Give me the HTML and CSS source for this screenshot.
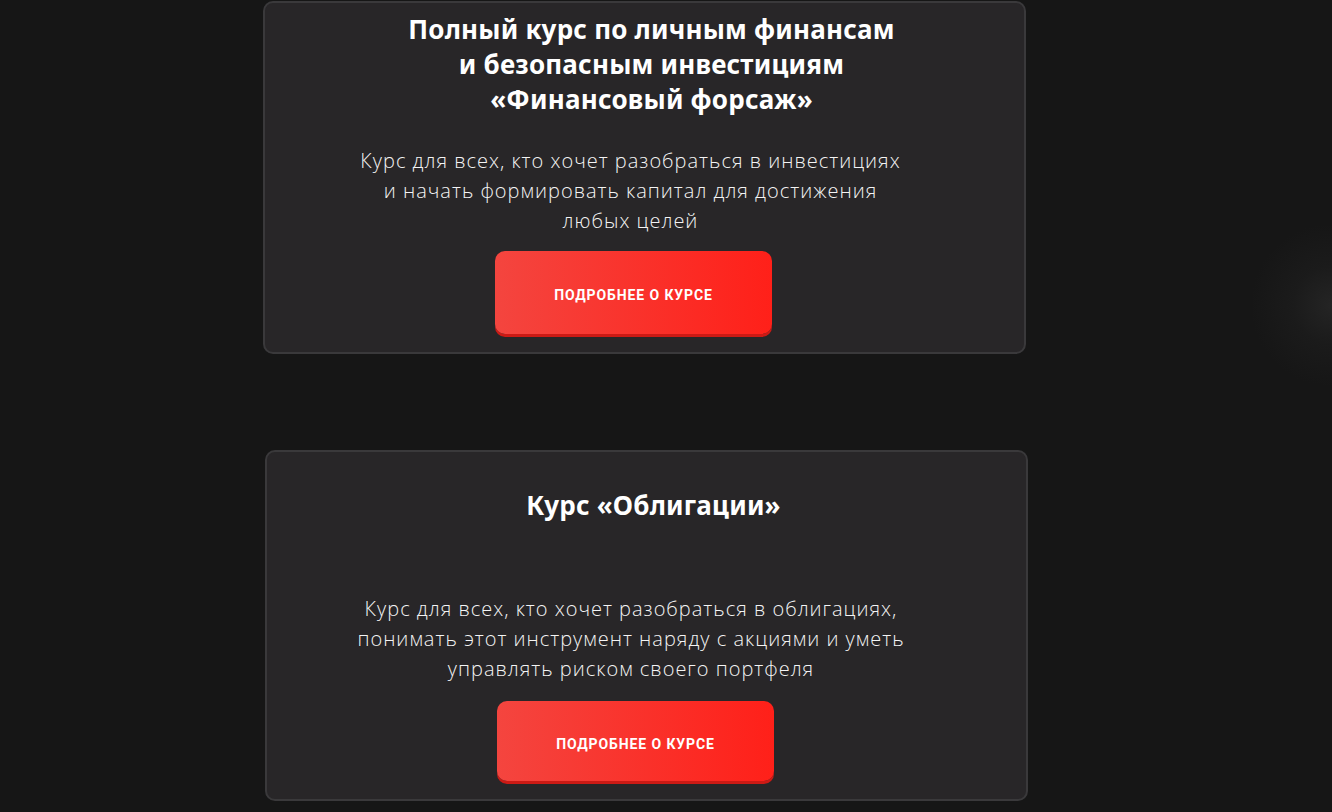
FILE: index.html
```html
<!DOCTYPE html>
<html lang="ru">
<head>
<meta charset="utf-8">
<link rel="stylesheet" href="styles.css">
</head>
<body>
<div class="glow"></div>
<main class="list">
  <section class="card card--first">
    <h2 class="card__title">Полный курс по личным финансам<br>и безопасным инвестициям<br>«Финансовый форсаж»</h2>
    <p class="card__text">Курс для всех, кто хочет разобраться в инвестициях<br>и начать формировать капитал для достижения<br>любых целей</p>
    <a class="card__btn" href="#">ПОДРОБНЕЕ О КУРСЕ</a>
  </section>
  <section class="card card--second">
    <h2 class="card__title">Курс «Облигации»</h2>
    <p class="card__text">Курс для всех, кто хочет разобраться в облигациях,<br>понимать этот инструмент наряду с акциями и уметь<br>управлять риском своего портфеля</p>
    <a class="card__btn" href="#">ПОДРОБНЕЕ О КУРСЕ</a>
  </section>
</main>
</body>
</html>
```
FILE: styles.css
```css
html, body {
  margin: 0;
  padding: 0;
  background: #161616;
  height: 100%;
  overflow: hidden;
}
body {
  position: relative;
  font-family: "Open Sans", "Noto Sans", sans-serif;
}
.glow {
  position: absolute;
  right: 0;
  top: 225px;
  width: 80px;
  height: 160px;
  background: radial-gradient(circle at 100% 50%, rgba(38,38,38,0.9) 0%, rgba(30,30,30,0.6) 35%, rgba(22,22,22,0) 72%);
}
.list {
  display: flex;
  flex-direction: column;
  gap: 96px;
  padding: 1px 0 0 263px;
}
.card {
  box-sizing: border-box;
  width: 763px;
  background: #282628;
  border: 2px solid #3a393b;
  border-radius: 10px;
  display: flex;
  flex-direction: column;
  align-items: center;
  padding: 9px 0 18px;
}
.card--second {
  margin-left: 2px;
  padding-top: 36px;
  height: 351px;
}
.card__title {
  margin: 0;
  padding-left: 14px;
  font-family: "Noto Sans", sans-serif;
  font-weight: 700;
  font-size: 26px;
  letter-spacing: 0.2px;
  line-height: 35px;
  color: #ffffff;
  text-align: center;
}
.card__text {
  margin: 29px 0 0;
  padding-right: 28px;
  font-family: "Open Sans", sans-serif;
  font-weight: 300;
  font-size: 20px;
  letter-spacing: 1px;
  line-height: 30px;
  color: #f4f4f4;
  text-align: center;
}
.card--second .card__text {
  margin-top: 71px;
  padding-right: 31px;
}
.card__btn {
  margin-top: 15px;
  margin-right: 22px;
  box-sizing: border-box;
  width: 277px;
  height: 83px;
  padding-top: 5px;
  border-radius: 10px;
  background: linear-gradient(90deg, #f4453f 0%, #ff2019 100%);
  box-shadow: 0 3px 0 #cc1a15;
  display: flex;
  align-items: center;
  justify-content: center;
  font-family: "Roboto", sans-serif;
  font-weight: 700;
  font-size: 14px;
  letter-spacing: 0.9px;
  color: #ffffff;
  text-decoration: none;
}
.card--second .card__btn {
  margin-top: 17px;
}
```
